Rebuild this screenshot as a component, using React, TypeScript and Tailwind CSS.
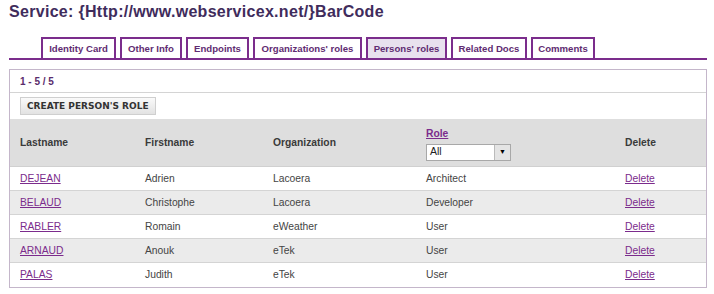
import React from "react";

const tabs: [string, string][] = [
  ["Identity Card", "w-[75px]"],
  ["Other Info", "w-[62px]"],
  ["Endpoints", "w-[63px]"],
  ["Organizations' roles", "w-[109px]"],
  ["Persons' roles", "w-[81px]"],
  ["Related Docs", "w-[76px]"],
  ["Comments", "w-[64px]"],
];

const rows = [
  ["DEJEAN", "Adrien", "Lacoera", "Architect"],
  ["BELAUD", "Christophe", "Lacoera", "Developer"],
  ["RABLER", "Romain", "eWeather", "User"],
  ["ARNAUD", "Anouk", "eTek", "User"],
  ["PALAS", "Judith", "eTek", "User"],
];

export default function App() {
  return (
    <div
      className="w-[714px] h-[294px] bg-white pl-[9px] pr-[7px] pt-[2px] overflow-hidden"
      style={{ fontFamily: '"Liberation Sans", Arial, sans-serif' }}
    >
      <h1 className="text-[16px] leading-[20px] font-bold tracking-[0.3px] text-[#3f2c5c] whitespace-nowrap">
        Service: {"{"}Http://www.webservicex.net/{"}"}BarCode
      </h1>
      <div className="mt-[15px] flex items-end gap-[4px] pl-[32px] border-b-2 border-[#7b2d8c] h-[23px]">
        {tabs.map(([t, w]) => (
          <div
            key={t}
            className={`${w} shrink-0 whitespace-nowrap h-[21px] border-2 border-b-0 border-[#7b2d8c] text-[9.6px] font-bold leading-[19px] text-center text-[#5f2c72] ${
              t === "Persons' roles" ? "bg-[#e8e1ee]" : "bg-white"
            }`}
          >
            {t}
          </div>
        ))}
      </div>
      <div className="mt-[9px] border border-[#c4b6ca] text-[10.3px] text-[#444]">
        <div className="h-[23px] border-b border-[#d4d4d4] pl-[10px] flex items-center text-[10px] font-bold text-[#5a2c6c]">
          1 - 5 / 5
        </div>
        <div className="h-[26px] pl-[10px] flex items-center">
          <button
            className="h-[18px] px-[6px] border border-[#cfcfcf] bg-gradient-to-b from-[#fafafa] to-[#e2e2e2] text-[9px] font-bold text-[#333] leading-none whitespace-nowrap"
            style={{ fontFamily: '"DejaVu Sans", sans-serif' }}
          >
            CREATE PERSON'S ROLE
          </button>
        </div>
        <div className="h-[48px] bg-[#dedede] border-b border-[#d0d0d0] pl-[10px] grid grid-cols-[125px_128px_153px_199px_1fr] items-center font-bold text-[#3a3a3a]">
          <div>Lastname</div>
          <div>Firstname</div>
          <div>Organization</div>
          <div className="flex flex-col gap-[4px] pt-[2px]">
            <a href="#" className="underline text-[#7b2b8c] leading-[13px]">
              Role
            </a>
            <div className="w-[85px] h-[17px] bg-white border border-[#a8a8a8] flex items-center justify-between font-normal text-[#222]">
              <span className="pl-[3px] text-[10.5px]">All</span>
              <span className="w-[16px] h-[15px] bg-[#e4e4e4] border-l border-[#bbb] flex items-center justify-center text-[7px] text-black">
                ▼
              </span>
            </div>
          </div>
          <div>Delete</div>
        </div>
        {rows.map((r, i) => (
          <div
            key={r[0]}
            className={`h-[24px] pl-[10px] grid grid-cols-[125px_128px_153px_199px_1fr] items-center ${
              i < rows.length - 1 ? "border-b border-[#d4d4d4]" : ""
            } ${i % 2 === 1 ? "bg-[#ebebeb]" : "bg-white"}`}
          >
            <a href="#" className="underline text-[#7b2b8c]">
              {r[0]}
            </a>
            <div>{r[1]}</div>
            <div>{r[2]}</div>
            <div>{r[3]}</div>
            <a href="#" className="underline text-[#7b2b8c]">
              Delete
            </a>
          </div>
        ))}
      </div>
    </div>
  );
}
